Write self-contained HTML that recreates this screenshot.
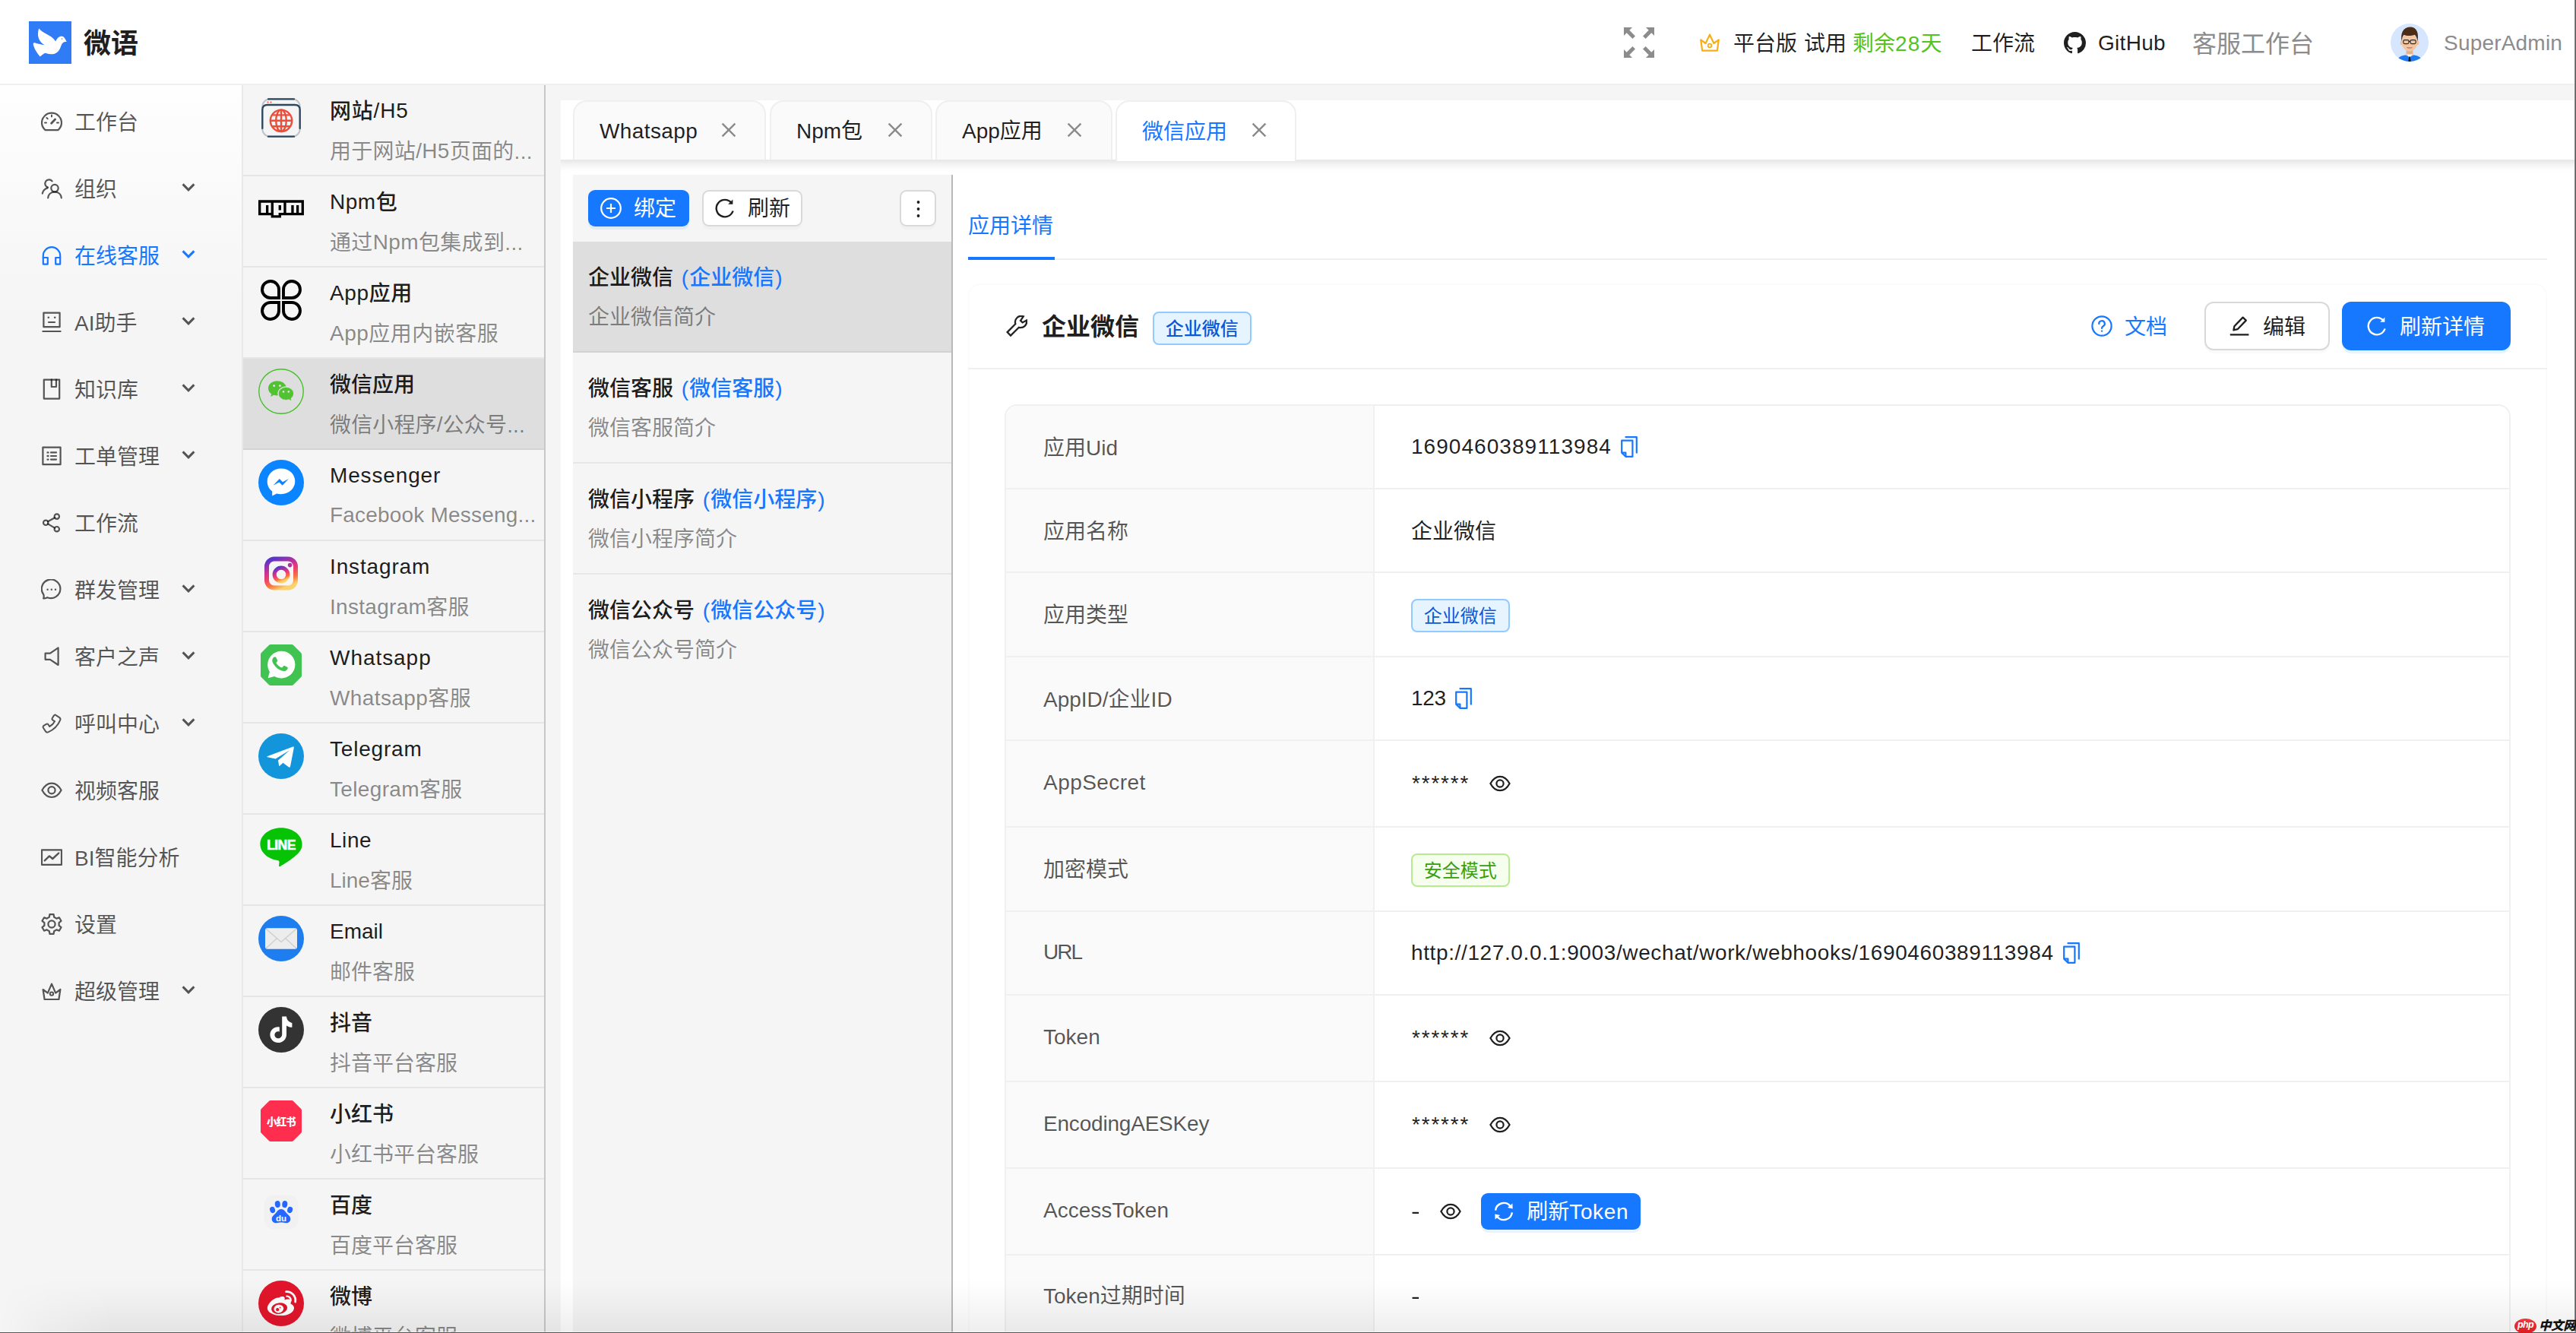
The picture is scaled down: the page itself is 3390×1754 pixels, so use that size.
<!DOCTYPE html>
<html lang="zh-CN">
<head>
<meta charset="utf-8">
<title>微语</title>
<style>
*{box-sizing:border-box;margin:0;padding:0}
html,body{width:3390px;height:1754px;overflow:hidden;background:#fff}
body{font-family:"Liberation Sans","Noto Sans CJK SC",sans-serif;font-size:28px;color:rgba(0,0,0,.88);position:relative;-webkit-font-smoothing:antialiased}
.abs{position:absolute}
svg{display:block}
/* header */
#hd{position:absolute;left:0;top:0;width:3390px;height:112px;background:#fff;border-bottom:2px solid #efefef;z-index:5}
#hd .t{position:absolute;top:0;height:110px;line-height:110px;white-space:nowrap}
#logo{position:absolute;left:38px;top:28px;width:56px;height:56px;background:#2f7cf6}
#brand{left:110px;top:3px!important;font-size:36px;font-weight:700;color:#1f1f1f}
/* sidebar */
#sb{position:absolute;left:0;top:112px;width:320px;height:1642px;border-right:2px solid #e9e9e9;background:linear-gradient(180deg,#fefefe 0,#f5f5f5 300px,#f5f5f5 100%)}
.mi{position:absolute;left:0;width:318px;height:80px;line-height:80px;color:rgba(0,0,0,.66);white-space:nowrap}
.mi svg.ic{position:absolute;left:54px;top:26px;width:28px;height:28px}
.mi span{position:absolute;left:98px;top:2px}
.mi svg.ar{position:absolute;left:239px;top:30px;width:18px;height:18px}
.mi.on{color:#1677ff}
/* channel list */
#cl{position:absolute;left:320px;top:112px;width:396px;height:1642px;background:#f5f5f5;overflow:hidden}
#clb{position:absolute;left:716px;top:112px;width:2px;height:1642px;background:#c8c8c8}
.ch{position:absolute;left:0;width:396px;height:120px;border-bottom:2px solid #e6e6e6}
.ch .l{font-style:normal;position:relative;top:-1px}.ch .c{margin-top:1px}.ch .ds.c{margin-top:2px}
.ch.on{background:#dedede;border-bottom-color:#d4d4d4}
.ch .av{position:absolute;left:20px;top:13px;width:60px;height:60px}
.ch .tt{position:absolute;left:114px;top:12px;line-height:44px;font-weight:500;color:rgba(0,0,0,.9);white-space:nowrap}
.ch .ds{position:absolute;left:114px;top:64px;line-height:44px;color:rgba(0,0,0,.46);white-space:nowrap}
/* main */
#mainbg{position:absolute;left:718px;top:112px;width:2672px;height:1642px;background:#f5f5f5}
#white{position:absolute;left:738px;top:132px;width:2652px;height:1622px;background:#fff}
#tabbar{position:absolute;left:738px;top:132px;width:2652px;height:78px;background:#fff;z-index:3}
#tabsh{position:absolute;left:738px;top:210px;width:2652px;height:16px;background:linear-gradient(180deg,#e8e8e8 0,#eaeaea 2px,#f1f1f1 5px,#fafafa 11px,#fff 16px);z-index:2}
.tab{position:absolute;top:0;height:78px;border:2px solid #efefef;border-bottom:none;border-radius:18px 18px 0 0;background:#fafafa;line-height:74px;white-space:nowrap}
.tab.on{background:#fff;color:#1677ff;height:80px;z-index:3}
.tab span{position:absolute;top:2px}
.tab span.x{top:0}
.tab svg{position:absolute;top:27px;width:20px;height:20px}
/* col3 */
#c3{position:absolute;left:754px;top:230px;width:498px;height:1524px;background:#f5f5f5}
#c3b{position:absolute;left:1252px;top:230px;width:2px;height:1524px;background:#b9b9b9}
.btn{position:absolute;height:48px;border-radius:9px;white-space:nowrap;line-height:44px}
.btn.pri{background:#1677ff;color:#fff;box-shadow:0 4px 0 rgba(5,145,255,.1)}
.btn.def{background:#fff;border:2px solid #d9d9d9;box-shadow:0 4px 0 rgba(0,0,0,.02);color:rgba(0,0,0,.88)}
.btn svg{position:absolute}
.btn span{position:absolute;top:3px}
.btn.def span{top:1px}
.it{position:absolute;left:0;width:498px;height:146px;border-bottom:2px solid #e7e7e7}
.it.on{background:#dedede;border-bottom-color:#d2d2d2}
.it .a{position:absolute;left:20px;top:26px;line-height:44px;font-weight:500;white-space:nowrap;color:rgba(0,0,0,.9)}
.it .a b{font-weight:500;color:#1677ff;margin-left:3px}.it .a b i{font-style:normal;display:inline-block;width:10.4px}.it .a b i.r{text-align:right}
.it .d{position:absolute;left:20px;top:78px;line-height:44px;color:rgba(0,0,0,.46);white-space:nowrap}
/* detail */
#navt{position:absolute;left:1274px;top:276px;line-height:44px;color:#1677ff;white-space:nowrap}
#ink{position:absolute;left:1274px;top:338px;width:114px;height:4px;background:#1677ff;z-index:1}
#navl{position:absolute;left:1274px;top:340px;width:2078px;height:2px;background:#f0f0f0}
#card{position:absolute;left:1274px;top:373px;width:2078px;height:1500px;border:2px solid #fbfbfb;border-radius:16px}
#cardl{position:absolute;left:1274px;top:484px;width:2078px;height:2px;background:#f0f0f0}
#ctitle{position:absolute;left:1371px;top:406px;line-height:48px;font-size:32px;font-weight:700;color:rgba(0,0,0,.9);white-space:nowrap}
.tag{display:inline-block;height:44px;line-height:42px;padding:0 14.8px;font-size:24px;border:2px solid #91caff;background:#e6f4ff;color:#0958d9;border-radius:8px;white-space:nowrap;vertical-align:middle}
.tag.g{border-color:#b7eb8f;background:#f6ffed;color:#389e0d}
#tb{position:absolute;left:1322px;top:532px;width:1982px;border:2px solid #f0f0f0;border-radius:16px 16px 0 0;overflow:hidden;border-bottom:none}
.row{display:flex;height:110px;border-bottom:2px solid #f0f0f0}
.row.h{height:114px}.row.t{height:111px}
.lb{flex:0 0 485px;border-right:2px solid #f0f0f0;background:#fafafa;padding-left:49px;color:rgba(0,0,0,.66);display:flex;align-items:center;white-space:nowrap;padding-bottom:3px}
.ct{flex:1;padding-left:48px;display:flex;align-items:center;white-space:nowrap}
.ct svg{flex:none}
.bigbtn{position:absolute;top:397px;height:64px;border-radius:12px;white-space:nowrap;line-height:60px}
.bigbtn svg{position:absolute}
.bigbtn span{position:absolute;top:0}
#edr{position:absolute;right:0;top:0;width:2px;height:1754px;background:linear-gradient(90deg,#9a9a9a,#4a4a4a);z-index:20}
#edb{position:absolute;left:0;bottom:0;width:3390px;height:2px;background:linear-gradient(180deg,rgba(255,255,255,.55) 0,rgba(255,255,255,.55) 40%,#5a5a5a 60%,#4c4c4c 100%);z-index:20}
#shb{position:absolute;left:0;bottom:0;width:3390px;height:70px;background:linear-gradient(180deg,rgba(0,0,0,0),rgba(0,0,0,.025) 40%,rgba(0,0,0,.065));-webkit-mask-image:linear-gradient(90deg,transparent 0,rgba(0,0,0,.5) 60px,#000 150px);mask-image:linear-gradient(90deg,transparent 0,rgba(0,0,0,.5) 60px,#000 150px);z-index:19}
.st{letter-spacing:1.8px;margin-left:1px}
.tag{position:relative;top:1px}

</style>
</head>
<body>

<div id="hd">
<div id="logo"><svg viewBox="0 0 56 56" width="56" height="56"><path fill="#fff" d="M13.4 9.6C18 16 30 18 35.2 26.6C37 22 40 19.5 43.4 19.7C47 20 48 24 49.8 27C46 26.5 44 28 42.5 32C40 40 36 43.5 28.6 43.3C26 43.2 24 42.5 21.6 41.8C18.5 43 17 45 14.6 46.4C10 41 6.5 35 5.7 30.1C5.8 28.6 6.6 28 7.6 28.2C12 29.5 16 30.5 20.8 31.3C14 28 11 20 12.2 14C12.5 12 12.8 10.5 13.4 9.6Z"/><circle cx="43.6" cy="23" r=".8" fill="#2f7cf6"/></svg></div>
<div class="t" id="brand">微语</div>
<svg class="abs" style="left:2137px;top:36px" width="40" height="40" viewBox="0 0 40 40" fill="#8c8c8c"><path d="M0 0H11L7.3 3.7 15 11.4 11.4 15 3.7 7.3 0 11ZM40 0V11L36.3 7.3 28.6 15 25 11.4 32.7 3.7 29 0ZM0 40V29L3.7 32.7 11.4 25 15 28.6 7.3 36.3 11 40ZM40 40H29L32.7 36.3 25 28.6 28.6 25 36.3 32.7 40 29Z"/></svg>
<svg class="abs" style="left:2236px;top:43px" width="28" height="26" viewBox="0 0 28 26" fill="none" stroke="#faad14" stroke-width="2.2" stroke-linejoin="round"><path d="M2.2 9.4l6.4 4.6L14 2.6l5.4 11.4 6.4-4.6-2 14.2H4.2Z"/><circle cx="14" cy="17" r="2.3" stroke-width="1.8"/></svg>
<div class="t" style="left:2281px;top:3px">平台版</div>
<div class="t" style="left:2374px;top:3px">试用</div>
<div class="t" style="left:2438px;top:3px;color:#52c41a"><span style="letter-spacing:0">剩余</span><span style="letter-spacing:1.2px">28</span>天</div>
<div class="t" style="left:2594px;top:3px">工作流</div>
<svg class="abs" style="left:2716px;top:42px" width="29" height="29" viewBox="0 0 16 16" fill="#1f1f1f"><path d="M8 0C3.58 0 0 3.58 0 8c0 3.54 2.29 6.53 5.47 7.59.4.07.55-.17.55-.38 0-.19-.01-.82-.01-1.49-2.01.37-2.53-.49-2.69-.94-.09-.23-.48-.94-.82-1.13-.28-.15-.68-.52-.01-.53.63-.01 1.08.58 1.23.82.72 1.21 1.87.87 2.33.66.07-.52.28-.87.51-1.07-1.78-.2-3.64-.89-3.64-3.95 0-.87.31-1.59.82-2.15-.08-.2-.36-1.02.08-2.12 0 0 .67-.21 2.2.82.64-.18 1.32-.27 2-.27.68 0 1.36.09 2 .27 1.53-1.04 2.2-.82 2.2-.82.44 1.1.16 1.92.08 2.12.51.56.82 1.27.82 2.15 0 3.07-1.87 3.75-3.65 3.95.29.25.54.73.54 1.48 0 1.07-.01 1.93-.01 2.2 0 .21.15.46.55.38A8.01 8.01 0 0 0 16 8c0-4.42-3.58-8-8-8z"/></svg>
<div class="t" style="left:2761px;top:2px;letter-spacing:.3px">GitHub</div>
<div class="t" style="left:2885px;top:3px;font-size:32px;color:#8c8c8c">客服工作台</div>
<svg class="abs" style="left:3146px;top:31px" width="50" height="50" viewBox="0 0 50 50"><defs><clipPath id="avc"><circle cx="25" cy="25" r="25"/></clipPath></defs><g clip-path="url(#avc)"><rect width="50" height="50" fill="#d6e6ff"/><path d="M8 50C9 45 13 42.4 19 41.4L31 41.4C37 42.4 41 45 42 50Z" fill="#1d7af3"/><rect x="20.6" y="32" width="8.8" height="10.4" fill="#e6b08c"/><path d="M20.8 40.6L25 45 29.2 40.6Z" fill="#fff"/><path d="M24.2 43.6h1.6l1 6.4h-3.6Z" fill="#1a1a1a"/><ellipse cx="14.4" cy="25.4" rx="1.7" ry="2.8" fill="#eebd98"/><ellipse cx="35.6" cy="25.4" rx="1.7" ry="2.8" fill="#eebd98"/><ellipse cx="25" cy="24.4" rx="10.4" ry="12.2" fill="#f3c6a2"/><path d="M14.5 23.4C13 13 16 5 25.5 4.6C34.4 4.6 37.4 12 35.5 23.4C34.8 19 33.6 16.4 31.8 14.8C27 16.6 20.5 16.4 17.6 14.8C15.8 16.6 15 19.6 14.5 23.4Z" fill="#4a2c17"/><g fill="none" stroke="#2b2b2b" stroke-width="1.2"><rect x="16.8" y="21.6" width="7.2" height="5" rx="1.8"/><rect x="26" y="21.6" width="7.2" height="5" rx="1.8"/><path d="M24 23.4h2"/></g><path d="M21.6 31.6q3.4 2.4 6.8 0Z" fill="#fff" stroke="#b5705a" stroke-width=".8"/></g></svg>
<div class="t" style="left:3216px;top:2px;color:#8c8c8c;letter-spacing:.2px">SuperAdmin</div>
</div>
<div id="sb">
<div class="mi" style="top:8px"><svg class="ic" viewBox="0 0 28 28" fill="none" stroke="currentColor" stroke-width="2.2" stroke-linecap="round" stroke-linejoin="round"><path d="M5.6 25.2H22.4C25 22.8 27 19.4 27 15.6A13 13 0 0 0 1 15.6C1 19.4 3 22.8 5.6 25.2Z"/><path d="M14 5.6v2M5 15.4h2M21 15.4h2M7.4 9l1.4 1.4" stroke-width="2"/><path d="M13.6 16.2l5-5.2" stroke-width="2.8"/></svg><span>工作台</span></div>
<div class="mi" style="top:96px"><svg class="ic" viewBox="0 0 28 28" fill="none" stroke="currentColor" stroke-width="2.2" stroke-linecap="round" stroke-linejoin="round"><circle cx="18" cy="13.6" r="4.7"/><path d="M9.2 26.4C9.6 21.6 13 18.6 18 18.6S26.4 21.6 26.8 26.4"/><path d="M14.6 4.4A5.2 5.2 0 1 0 9 12.6"/><path d="M1.8 20.6C2.6 17 5 14.4 8.4 13.4"/></svg><span>组织</span><svg class="ar" viewBox="0 0 18 18" fill="none" stroke="currentColor" stroke-width="3" stroke-linecap="butt" stroke-linejoin="miter"><path d="M1.6 4.4L9 11.8l7.4-7.4"/></svg></div>
<div class="mi on" style="top:184px"><svg class="ic" viewBox="0 0 28 28" fill="none" stroke="currentColor" stroke-width="2.2" stroke-linecap="round" stroke-linejoin="round"><path d="M2.8 17V14.4A11.2 11.2 0 0 1 25.2 14.4V17"/><rect x="2.8" y="17" width="6" height="8.6"/><rect x="19.2" y="17" width="6" height="8.6"/></svg><span>在线客服</span><svg class="ar" viewBox="0 0 18 18" fill="none" stroke="currentColor" stroke-width="3" stroke-linecap="butt" stroke-linejoin="miter"><path d="M1.6 4.4L9 11.8l7.4-7.4"/></svg></div>
<div class="mi" style="top:272px"><svg class="ic" viewBox="0 0 28 28" fill="none" stroke="currentColor" stroke-width="2.2" stroke-linecap="round" stroke-linejoin="round"><rect x="3.4" y="1.6" width="21.2" height="18.6"/><path d="M2.4 26h23.2"/><path d="M10 14h8"/><circle cx="9.8" cy="7.8" r="1.3" fill="currentColor" stroke="none"/><circle cx="18.2" cy="7.8" r="1.3" fill="currentColor" stroke="none"/></svg><span>AI助手</span><svg class="ar" viewBox="0 0 18 18" fill="none" stroke="currentColor" stroke-width="3" stroke-linecap="butt" stroke-linejoin="miter"><path d="M1.6 4.4L9 11.8l7.4-7.4"/></svg></div>
<div class="mi" style="top:360px"><svg class="ic" viewBox="0 0 28 28" fill="none" stroke="currentColor" stroke-width="2.2" stroke-linecap="round" stroke-linejoin="round"><rect x="3.8" y="1.6" width="20.4" height="25"/><path d="M13.8 1.6V11H20V1.6"/></svg><span>知识库</span><svg class="ar" viewBox="0 0 18 18" fill="none" stroke="currentColor" stroke-width="3" stroke-linecap="butt" stroke-linejoin="miter"><path d="M1.6 4.4L9 11.8l7.4-7.4"/></svg></div>
<div class="mi" style="top:448px"><svg class="ic" viewBox="0 0 28 28" fill="none" stroke="currentColor" stroke-width="2.2" stroke-linecap="round" stroke-linejoin="round"><rect x="2.4" y="2.6" width="23.2" height="22.6"/><path d="M13 9.4h7M13 14h7M13 18.6h7"/><path d="M8.6 9.4h.8M8.6 14h.8M8.6 18.6h.8" stroke-width="2.4"/></svg><span>工单管理</span><svg class="ar" viewBox="0 0 18 18" fill="none" stroke="currentColor" stroke-width="3" stroke-linecap="butt" stroke-linejoin="miter"><path d="M1.6 4.4L9 11.8l7.4-7.4"/></svg></div>
<div class="mi" style="top:536px"><svg class="ic" viewBox="0 0 28 28" fill="none" stroke="currentColor" stroke-width="2.2" stroke-linecap="round" stroke-linejoin="round"><circle cx="20.8" cy="5.6" r="3.2"/><circle cx="6.2" cy="13.8" r="3.2"/><circle cx="20.8" cy="22.2" r="3.2"/><path d="M9 12.2l9-5M9 15.4l9 5.2"/></svg><span>工作流</span></div>
<div class="mi" style="top:624px"><svg class="ic" viewBox="0 0 28 28" fill="none" stroke="currentColor" stroke-width="2.2" stroke-linecap="round" stroke-linejoin="round"><path d="M3.2 25.4C5.6 25.6 7.4 25 8.4 24.2A12.3 12.3 0 1 0 3.4 20.4C3.8 22 3.8 23.8 3.2 25.4Z"/><circle cx="8.6" cy="13.8" r="1.2" fill="currentColor" stroke="none"/><circle cx="13.8" cy="13.8" r="1.2" fill="currentColor" stroke="none"/><circle cx="19" cy="13.8" r="1.2" fill="currentColor" stroke="none"/></svg><span>群发管理</span><svg class="ar" viewBox="0 0 18 18" fill="none" stroke="currentColor" stroke-width="3" stroke-linecap="butt" stroke-linejoin="miter"><path d="M1.6 4.4L9 11.8l7.4-7.4"/></svg></div>
<div class="mi" style="top:712px"><svg class="ic" viewBox="0 0 28 28" fill="none" stroke="currentColor" stroke-width="2.2" stroke-linecap="round" stroke-linejoin="round"><path d="M22.6 2.4V25L12 17.8H5.6V9.6H12Z"/></svg><span>客户之声</span><svg class="ar" viewBox="0 0 18 18" fill="none" stroke="currentColor" stroke-width="3" stroke-linecap="butt" stroke-linejoin="miter"><path d="M1.6 4.4L9 11.8l7.4-7.4"/></svg></div>
<div class="mi" style="top:800px"><svg class="ic" viewBox="0 0 28 28" fill="none" stroke="currentColor" stroke-width="2.2" stroke-linecap="round" stroke-linejoin="round"><path d="M19.6 3.2l4.6 3c1.2.8 1.5 2.2 1 3.4C21.8 17.6 17.4 22 9.4 25.4c-1.2.5-2.6.2-3.4-1L3 19.8c-.7-1-.4-2.2.6-2.9l3.2-2c1-.6 2.2-.3 2.8.6L11.2 18c3-1.6 5.2-3.8 6.8-6.8L15.5 9.6c-.9-.6-1.2-1.8-.6-2.8l2-3.2c.7-1 1.9-1.3 2.9-.6Z" stroke-width="2"/></svg><span>呼叫中心</span><svg class="ar" viewBox="0 0 18 18" fill="none" stroke="currentColor" stroke-width="3" stroke-linecap="butt" stroke-linejoin="miter"><path d="M1.6 4.4L9 11.8l7.4-7.4"/></svg></div>
<div class="mi" style="top:888px"><svg class="ic" viewBox="0 0 28 28" fill="none" stroke="currentColor" stroke-width="2.2" stroke-linecap="round" stroke-linejoin="round"><path d="M1.4 13.8C4.8 7.4 9.2 4.6 14 4.6s9.2 2.8 12.6 9.2C23.2 20.2 18.8 23 14 23S4.8 20.2 1.4 13.8Z"/><circle cx="14" cy="13.8" r="4.6"/></svg><span>视频客服</span></div>
<div class="mi" style="top:976px"><svg class="ic" viewBox="0 0 28 28" fill="none" stroke="currentColor" stroke-width="2.2" stroke-linecap="round" stroke-linejoin="round"><rect x="1" y="4.4" width="26" height="19.4"/><path d="M4.8 18.4l6.2-6 4.2 3.6 8-7.4" stroke-width="2.4"/></svg><span>BI智能分析</span></div>
<div class="mi" style="top:1064px"><svg class="ic" viewBox="0 0 28 28" fill="none" stroke="currentColor" stroke-width="2.2" stroke-linecap="round" stroke-linejoin="round"><path d="M10.8 4.7 L11.4 1.1 L16.6 1.1 L17.2 4.7 L20.4 6.6 L23.9 5.3 L26.5 9.8 L23.6 12.1 L23.6 15.9 L26.5 18.2 L23.9 22.7 L20.4 21.4 L17.2 23.3 L16.6 26.9 L11.4 26.9 L10.8 23.3 L7.6 21.4 L4.1 22.7 L1.5 18.2 L4.4 15.9 L4.4 12.1 L1.5 9.8 L4.1 5.3 L7.6 6.6Z"/><circle cx="14" cy="14" r="4.6"/></svg><span>设置</span></div>
<div class="mi" style="top:1152px"><svg class="ic" viewBox="0 0 28 28" fill="none" stroke="currentColor" stroke-width="2.2" stroke-linecap="round" stroke-linejoin="round"><path d="M2.6 12l6.2 4.6L14 4.6l5.2 12L25.4 12l-2 13H4.6Z"/><circle cx="14" cy="17.6" r="2.2" stroke-width="2"/></svg><span>超级管理</span><svg class="ar" viewBox="0 0 18 18" fill="none" stroke="currentColor" stroke-width="3" stroke-linecap="butt" stroke-linejoin="miter"><path d="M1.6 4.4L9 11.8l7.4-7.4"/></svg></div>
</div>
<div id="cl">
<div class="ch" style="top:0px"><svg class="av" viewBox="0 0 60 60" ><g fill="none" stroke="#2c4861" stroke-width="2.3" stroke-linecap="round">
<rect x="5.3" y="5.3" width="49.4" height="49.4" rx="10" opacity=".28" stroke-width="2"/><path d="M13 5.3H47M13 54.7H47"/><path d="M5.3 44V19.5Q5.3 13 12 13H48Q54.7 13 54.7 19.5V44"/></g>
<g fill="none" stroke="#ea4f3b" stroke-width="2.4"><circle cx="30" cy="33.8" r="14.2"/><ellipse cx="30" cy="33.8" rx="6.8" ry="14.2"/><path d="M30 19.6V48M15.8 33.8H44.2M18 26.4H42M18 41.2H42"/></g>
<circle cx="12.5" cy="9.4" r="1" fill="#ea4f3b"/><circle cx="16.5" cy="9.4" r="1" fill="#ea4f3b"/></svg><div class="tt c" style="letter-spacing:0.8px">网站<i class="l">/H5</i></div><div class="ds c" style="letter-spacing:0.3px">用于网站<i class="l">/H5</i>页面的...</div></div>
<div class="ch" style="top:120px"><svg class="av" viewBox="0 0 60 60" ><g transform="translate(0,18.3) scale(3.33)"><path fill="#000" fill-rule="evenodd" d="M0,0h18v6H9v1H5V6H0V0z M1,5h2V2h1v3h1V1H1V5z M6,1v5h2V5h2V1H6z M8,2h1v2H8V2z M11,1v4h2V2h1v3h1V2h1v3h1V1H11z"/></g></svg><div class="tt c" style="letter-spacing:0.5px"><i class="l">Npm</i>包</div><div class="ds c" style="letter-spacing:0.35px">通过<i class="l">Npm</i>包集成到...</div></div>
<div class="ch" style="top:240px"><svg class="av" viewBox="0 0 60 60" ><g fill="none" stroke="#000" stroke-width="3.9" stroke-linejoin="miter">
<path d="M27 27H16.5A11 11 0 1 1 27 16.5Z"/><path d="M33 27V16.5A11 11 0 1 1 43.5 27Z"/>
<path d="M27 33V43.5A11 11 0 1 1 16.5 33Z"/><path d="M33 33H43.5A11 11 0 1 1 33 43.5Z"/></g></svg><div class="tt c" style="letter-spacing:0.6px"><i class="l">App</i>应用</div><div class="ds c" style="letter-spacing:0.5px"><i class="l">App</i>应用内嵌客服</div></div>
<div class="ch on" style="top:360px"><svg class="av" viewBox="0 0 60 60" ><circle cx="30" cy="30" r="29.2" fill="none" stroke="#46c02a" stroke-width="1.4"/>
<path fill="#51c332" d="M24.6 16.2c-6.4 0-11.6 4.3-11.6 9.7 0 3 1.7 5.7 4.3 7.5l-1.3 3.6 4.3-2.2c1.3.4 2.7.6 4.3.6.4 0 .8 0 1.2-.1-.3-.8-.4-1.7-.4-2.6 0-5 4.8-9.1 10.7-9.1h.5C35.4 19.3 30.5 16.2 24.6 16.2Z"/>
<ellipse cx="36.4" cy="32.9" rx="10.2" ry="8.6" fill="#51c332" stroke="#dedede" stroke-width="1"/>
<path fill="#51c332" d="M40 40l3.4 2.2-1-3.8Z"/>
<circle cx="20.6" cy="22.6" r="1.5" fill="#dedede"/><circle cx="28.4" cy="22.6" r="1.5" fill="#dedede"/>
<circle cx="33" cy="30.4" r="1.3" fill="#dedede"/><circle cx="39.8" cy="30.4" r="1.3" fill="#dedede"/></svg><div class="tt c">微信应用</div><div class="ds c" style="letter-spacing:0.15px">微信小程序<i class="l">/</i>公众号...</div></div>
<div class="ch" style="top:480px"><svg class="av" viewBox="0 0 60 60" ><circle cx="30" cy="30" r="30" fill="#0a84ff"/>
<path fill="#fff" d="M30 11.5c-10.3 0-18.3 7.5-18.3 16.9 0 5.3 2.5 10 6.5 13.1v6.1l5.9-3.2c1.9.5 3.8.8 5.9.8 10.3 0 18.3-7.5 18.3-16.9S40.3 11.5 30 11.5Z"/>
<path fill="#0a84ff" d="M19.5 33.8l8.3-8.8 4.2 4.2 7.9-4.2-8.2 8.8-4.3-4.2Z"/></svg><div class="tt" style="letter-spacing:0.85px">Messenger</div><div class="ds" style="letter-spacing:0.2px">Facebook Messeng...</div></div>
<div class="ch" style="top:600px"><svg class="av" viewBox="0 0 60 60" ><defs><linearGradient id="ig" x1="0.2" y1="0" x2="0.6" y2="1"><stop offset="0" stop-color="#5b35c9"/><stop offset="0.3" stop-color="#c22f9c"/><stop offset="0.55" stop-color="#ee3f6d"/><stop offset="0.8" stop-color="#f77a3b"/><stop offset="1" stop-color="#fcd26a"/></linearGradient></defs>
<rect x="11" y="10.5" width="38" height="38" rx="10" fill="none" stroke="url(#ig)" stroke-width="6"/>
<circle cx="30" cy="31" r="8.8" fill="none" stroke="url(#ig)" stroke-width="5.2"/><circle cx="41.6" cy="18.6" r="2.8" fill="#b72fa8"/></svg><div class="tt" style="letter-spacing:0.85px">Instagram</div><div class="ds c" style="letter-spacing:0.3px"><i class="l">Instagram</i>客服</div></div>
<div class="ch" style="top:720px"><svg class="av" viewBox="0 0 60 60" ><path fill="#41c352" stroke="#41c352" stroke-width="6" stroke-linejoin="round" d="M16 6H44L54 16V44L44 54H16L6 44V16Z"/>
<path fill="#fff" d="M30.3 11.8c-10 0-18.1 8-18.1 17.9 0 3.4 1 6.6 2.7 9.3L12.6 47.2l8.6-2.2c2.7 1.5 5.8 2.4 9.1 2.4 10 0 18.1-8 18.1-17.9S40.3 11.8 30.3 11.8Z"/>
<path fill="#41c352" d="M24 19.5c-.6-1.3-1.2-1.3-1.8-1.3h-1.5c-.5 0-1.4.2-2.1 1s-2.8 2.7-2.8 6.6 2.9 7.7 3.3 8.2 5.6 8.8 13.8 12c6.8 2.6 8.2 2.1 9.7 2s4.8-1.9 5.5-3.8.7-3.5.5-3.8-.7-.5-1.5-.9-4.8-2.3-5.5-2.6-1.3-.4-1.8.4-2.1 2.6-2.6 3.1-1 .6-1.8.2-3.4-1.2-6.5-4c-2.4-2.1-4-4.7-4.5-5.5s0-1.2.4-1.6c.4-.4.8-1 1.2-1.4s.5-.8.8-1.3 0-1-.1-1.4S24.6 20.8 24 19.5Z" transform="translate(8.5,8.2) scale(.62)"/></svg><div class="tt" style="letter-spacing:0.95px">Whatsapp</div><div class="ds c" style="letter-spacing:0.4px"><i class="l">Whatsapp</i>客服</div></div>
<div class="ch" style="top:840px"><svg class="av" viewBox="0 0 60 60" ><circle cx="30" cy="30" r="30" fill="#1395dc"/>
<path fill="#fff" d="M11.6 30.2L45.5 17.6c.8-.3 1.5.2 1.3 1.2L42 43.8c-.2 1-1 1.3-1.8.8l-7.8-5.8-4 3.8c-.5.5-1.2.3-1.3-.4L26 35.5 41 22.2 22.6 33.6 12 31.2c-.8-.2-.9-.8-.4-1Z"/></svg><div class="tt" style="letter-spacing:0.8px">Telegram</div><div class="ds c" style="letter-spacing:0.35px"><i class="l">Telegram</i>客服</div></div>
<div class="ch" style="top:960px"><svg class="av" viewBox="0 0 60 60" ><path fill="#06c305" d="M30 4.2c-15.2 0-27.6 9.6-27.6 21.5 0 10.5 9.6 19.3 22.6 21.2 1.5.3 2.6 1 2.5 2.3l-.5 4.8c-.1 1.1.9 1.5 1.9.9 4-2.2 14.6-8.6 20.6-14.3 5.2-4.2 8.1-9.1 8.1-14.9C57.6 13.8 45.2 4.2 30 4.2Z"/>
<text x="30" y="32.6" text-anchor="middle" font-family="Liberation Sans, sans-serif" font-weight="700" font-size="17.5" fill="#fff" letter-spacing="-0.6" stroke="#fff" stroke-width=".6">LINE</text></svg><div class="tt" style="letter-spacing:0.55px">Line</div><div class="ds c"><i class="l">Line</i>客服</div></div>
<div class="ch" style="top:1080px"><svg class="av" viewBox="0 0 60 60" ><circle cx="30" cy="30" r="30" fill="#1e7ef0"/>
<rect x="9" y="16.2" width="42" height="27.6" rx="3" fill="#ededed"/>
<path fill="none" stroke="#cfcfcf" stroke-width="1.5" stroke-linejoin="round" d="M9.8 17L30 34.5 50.2 17M9.8 43L24.4 29.8M50.2 43L35.6 29.8"/></svg><div class="tt">Email</div><div class="ds c">邮件客服</div></div>
<div class="ch" style="top:1200px"><svg class="av" viewBox="0 0 60 60" ><circle cx="30" cy="30" r="30" fill="#333"/>
<path fill="#fff" d="M31.2 12.6h5.8c.3 4.5 3.1 7.6 7.4 8.3v5.8c-2.8 0-5.3-.8-7.4-2.3V36.2c0 6.3-4.9 10.9-10.9 10.9S15.4 42.4 15.4 36.6s4.7-10.3 10.6-10.3c.6 0 1.2 0 1.8.1v6.1c-.6-.2-1.2-.3-1.8-.3-2.5 0-4.6 2-4.6 4.5s2.1 4.5 4.7 4.5c2.7 0 5.1-2 5.1-5.5Z"/></svg><div class="tt c">抖音</div><div class="ds c">抖音平台客服</div></div>
<div class="ch" style="top:1320px"><svg class="av" viewBox="0 0 60 60" ><path fill="#ff2d4e" stroke="#ff2d4e" stroke-width="6" stroke-linejoin="round" d="M16 6H44L54 16V44L44 54H16L6 44V16Z"/>
<text x="30" y="36.4" text-anchor="middle" font-family="Noto Sans CJK SC, sans-serif" font-weight="900" font-size="13.4" fill="#fff" letter-spacing="-0.8">小红书</text></svg><div class="tt c">小红书</div><div class="ds c">小红书平台客服</div></div>
<div class="ch" style="top:1440px"><svg class="av" viewBox="0 0 60 60" ><rect x="7.5" y="7.5" width="45" height="45" rx="13" fill="#f1f1f1"/>
<g fill="#2468ff"><ellipse cx="18.6" cy="27" rx="3.4" ry="4.2" transform="rotate(-18 18.6 27)"/><ellipse cx="25.3" cy="19.6" rx="3.5" ry="4.5" transform="rotate(-4 25.3 19.6)"/><ellipse cx="34.8" cy="19.6" rx="3.5" ry="4.5" transform="rotate(6 34.8 19.6)"/><ellipse cx="41.6" cy="27" rx="3.4" ry="4.2" transform="rotate(18 41.6 27)"/>
<path d="M30 26c3.6 0 5 2.8 7.3 5.5 2 2.3 5 3.8 5 7.5 0 3.3-2.6 5.3-5.8 5.3-2.5 0-4.2-.7-6.5-.7s-4 .7-6.5.7c-3.2 0-5.8-2-5.8-5.3 0-3.7 3-5.2 5-7.5C25 28.8 26.4 26 30 26Z"/></g>
<text x="30" y="42.2" text-anchor="middle" font-family="Liberation Sans, sans-serif" font-weight="700" font-size="11.5" fill="#fff">du</text></svg><div class="tt c">百度</div><div class="ds c">百度平台客服</div></div>
<div class="ch" style="top:1560px"><svg class="av" viewBox="0 0 60 60" ><circle cx="30" cy="30" r="30" fill="#e2162c"/>
<path fill="#fff" d="M27.2 22.5c3.2-1.8 6.2-1.8 7.2-.2.5.9.4 2 0 3.2 3.6-1.4 7-1.3 8.2.9.6 1.1.4 2.5-.3 4 2.8 1 4.7 3 4.7 5.5 0 5.5-7.7 10.2-17.2 10.2S11.8 42 11.8 36.2c0-3.2 2.3-6.8 6-10C21.2 23.4 24.6 22 27.2 22.5Z"/>
<ellipse cx="27.6" cy="36.6" rx="10.6" ry="7.2" fill="#e2162c" transform="rotate(-8 27.6 36.6)"/>
<ellipse cx="26.8" cy="37.2" rx="6.4" ry="5.4" fill="#fff" transform="rotate(-8 26.8 37.2)"/>
<circle cx="25.2" cy="38.2" r="2.1" fill="#e2162c"/><circle cx="28.6" cy="35.6" r=".9" fill="#e2162c"/>
<g fill="none" stroke="#fff" stroke-linecap="round"><path d="M37.4 20.6a5.2 5.2 0 0 1 5.2 6" stroke-width="2.4"/><path d="M36.6 14.6a11.4 11.4 0 0 1 12 13.4" stroke-width="2.8"/></g></svg><div class="tt c">微博</div><div class="ds c">微博平台客服</div></div>
</div><div id="clb"></div>
<div id="mainbg"></div><div id="white"></div>
<div id="tabbar">
<div class="tab" style="left:16px;width:254px"><span style="left:33px"><i style="font-style:normal;letter-spacing:.4px">Whatsapp</i></span><span class="x" style="left:193px"><svg viewBox="0 0 20 20" fill="none" stroke="#8a8a8a" stroke-width="2.4"><path d="M1.6 1.6L18.4 18.4M18.4 1.6L1.6 18.4"/></svg></span></div>
<div class="tab" style="left:275px;width:214px"><span style="left:33px">Npm包</span><span class="x" style="left:153px"><svg viewBox="0 0 20 20" fill="none" stroke="#8a8a8a" stroke-width="2.4"><path d="M1.6 1.6L18.4 18.4M18.4 1.6L1.6 18.4"/></svg></span></div>
<div class="tab" style="left:493px;width:233px"><span style="left:33px">App应用</span><span class="x" style="left:171px"><svg viewBox="0 0 20 20" fill="none" stroke="#8a8a8a" stroke-width="2.4"><path d="M1.6 1.6L18.4 18.4M18.4 1.6L1.6 18.4"/></svg></span></div>
<div class="tab on" style="left:730px;width:238px"><span style="left:33px;top:3px">微信应用</span><span class="x" style="left:177px"><svg viewBox="0 0 20 20" fill="none" stroke="#8a8a8a" stroke-width="2.4"><path d="M1.6 1.6L18.4 18.4M18.4 1.6L1.6 18.4"/></svg></span></div>
</div><div id="tabsh"></div>
<div id="c3">
<div class="btn pri" style="left:20px;top:20px;width:133px"><svg style="left:16px;top:10px" width="28" height="28" viewBox="0 0 28 28" fill="none" stroke="#fff" stroke-width="2.2"><circle cx="14" cy="14" r="12.8"/><path d="M14 8v12M8 14h12"/></svg><span style="left:60px">绑定</span></div>
<div class="btn def" style="left:170px;top:20px;width:132px"><svg style="left:14px;top:8px" width="28" height="28" viewBox="0 0 28 28" fill="none" stroke="#1f1f1f" stroke-width="2.4"><path d="M24.6 17.5A11.2 11.2 0 1 1 22.6 7"/><path d="M24.4 2.6v6.2h-6.2z" fill="#1f1f1f" stroke="none"/></svg><span style="left:58px">刷新</span></div>
<div class="btn def" style="left:430px;top:20px;width:48px"><svg style="left:20px;top:11px" width="5" height="24" viewBox="0 0 5 24" fill="#1f1f1f"><circle cx="2.5" cy="3" r="1.9"/><circle cx="2.5" cy="12" r="1.9"/><circle cx="2.5" cy="21" r="1.9"/></svg></div>
<div class="it on" style="top:88px"><div class="a">企业微信 <b><i>(</i>企业微信<i class="r">)</i></b></div><div class="d">企业微信简介</div></div>
<div class="it" style="top:234px"><div class="a">微信客服 <b><i>(</i>微信客服<i class="r">)</i></b></div><div class="d">微信客服简介</div></div>
<div class="it" style="top:380px"><div class="a">微信小程序 <b><i>(</i>微信小程序<i class="r">)</i></b></div><div class="d">微信小程序简介</div></div>
<div class="it" style="top:526px;border-bottom:none"><div class="a">微信公众号 <b><i>(</i>微信公众号<i class="r">)</i></b></div><div class="d">微信公众号简介</div></div>
</div><div id="c3b"></div>
<div id="navt">应用详情</div><div id="ink"></div><div id="navl"></div>
<div id="card"></div><div id="cardl"></div>
<svg class="abs" style="left:1324px;top:415px" width="28" height="28" viewBox="0 0 28 28" fill="none" stroke="#222" stroke-width="2.3" stroke-linejoin="miter"><path d="M22.8 1.4A8 8 0 0 0 12.3 11.2L1.6 22.1 6 26.6 16.9 15.8A8 8 0 0 0 27 6.6L21.6 9.4 19 6.8Z"/></svg>
<div id="ctitle">企业微信</div>
<div class="tag" style="position:absolute;left:1517px;top:410px;font-weight:500">企业微信</div>
<svg class="abs" style="left:2752px;top:415px" width="28" height="28" viewBox="0 0 28 28" fill="none" stroke="#1677ff" stroke-width="2.2" stroke-linecap="round"><circle cx="14" cy="14" r="12.6"/><path d="M10.2 11a3.8 3.8 0 1 1 5.6 3.3c-1.2.7-1.8 1.4-1.8 2.7"/><circle cx="14" cy="20.6" r="1.2" fill="#1677ff" stroke="none"/></svg>
<div class="abs" style="left:2796px;top:409px;line-height:44px;color:#1677ff">文档</div>
<div class="bigbtn" style="left:2901px;width:165px;background:#fff;border:2px solid #d9d9d9;box-shadow:0 4px 0 rgba(0,0,0,.02)"><svg style="left:30px;top:15px" width="28" height="28" viewBox="0 0 28 28" fill="none" stroke="#1f1f1f" stroke-width="2.3" stroke-linejoin="round"><path d="M1.8 26.4h24.6"/><path d="M6.4 20.4l1-5.2L18.6 3.6l4.2 4L11.6 19.2Z"/></svg><span style="left:75px;top:2px">编辑</span></div>
<div class="bigbtn" style="left:3082px;width:222px;background:#1677ff;color:#fff;box-shadow:0 4px 0 rgba(5,145,255,.1)"><svg style="left:32px;top:18px" width="28" height="28" viewBox="0 0 28 28" fill="none" stroke="#fff" stroke-width="2.4"><path d="M24.6 17.5A11.2 11.2 0 1 1 22.6 7"/><path d="M24.4 2.6v6.2h-6.2z" fill="#fff" stroke="none"/></svg><span style="left:76px;top:4px">刷新详情</span></div>
<div id="tb">
<div class="row"><div class="lb">应用Uid</div><div class="ct"><span style="letter-spacing:1.05px">1690460389113984</span><svg style="margin-left:12px" width="22" height="28" viewBox="0 0 22 28" fill="none" stroke="#1677ff" stroke-width="2.2" stroke-linejoin="round"><path d="M1.2 5.6H15.4V26.8H6.4L1.2 21.6Z"/><path d="M1.2 21.6H6.4V26.8"/><path d="M5.6 1.2H20.8V22.6"/></svg></div></div>
<div class="row"><div class="lb">应用名称</div><div class="ct" style="padding-bottom:2px">企业微信</div></div>
<div class="row t"><div class="lb">应用类型</div><div class="ct"><span class="tag">企业微信</span></div></div>
<div class="row"><div class="lb">AppID/企业ID</div><div class="ct"><span style="letter-spacing:-.3px">123</span><svg style="margin-left:12px" width="22" height="28" viewBox="0 0 22 28" fill="none" stroke="#1677ff" stroke-width="2.2" stroke-linejoin="round"><path d="M1.2 5.6H15.4V26.8H6.4L1.2 21.6Z"/><path d="M1.2 21.6H6.4V26.8"/><path d="M5.6 1.2H20.8V22.6"/></svg></div></div>
<div class="row h"><div class="lb" style="letter-spacing:.45px">AppSecret</div><div class="ct"><span class="st">******</span><svg style="margin-left:26px" width="28" height="28" viewBox="0 0 28 28" fill="none" stroke="#1f1f1f" stroke-width="2.2"><path d="M1.4 14C4.8 7.6 9.2 4.8 14 4.8s9.2 2.8 12.6 9.2C23.2 20.4 18.8 23.2 14 23.2S4.8 20.4 1.4 14Z"/><circle cx="14" cy="14" r="4.6"/></svg></div></div>
<div class="row t"><div class="lb">加密模式</div><div class="ct"><span class="tag g">安全模式</span></div></div>
<div class="row"><div class="lb" style="letter-spacing:-2px">URL</div><div class="ct"><span style="letter-spacing:.62px">http://127.0.0.1:9003/wechat/work/webhooks/1690460389113984</span><svg style="margin-left:12px" width="22" height="28" viewBox="0 0 22 28" fill="none" stroke="#1677ff" stroke-width="2.2" stroke-linejoin="round"><path d="M1.2 5.6H15.4V26.8H6.4L1.2 21.6Z"/><path d="M1.2 21.6H6.4V26.8"/><path d="M5.6 1.2H20.8V22.6"/></svg></div></div>
<div class="row h"><div class="lb">Token</div><div class="ct"><span class="st">******</span><svg style="margin-left:26px" width="28" height="28" viewBox="0 0 28 28" fill="none" stroke="#1f1f1f" stroke-width="2.2"><path d="M1.4 14C4.8 7.6 9.2 4.8 14 4.8s9.2 2.8 12.6 9.2C23.2 20.4 18.8 23.2 14 23.2S4.8 20.4 1.4 14Z"/><circle cx="14" cy="14" r="4.6"/></svg></div></div>
<div class="row h"><div class="lb" style="letter-spacing:-.2px">EncodingAESKey</div><div class="ct"><span class="st">******</span><svg style="margin-left:26px" width="28" height="28" viewBox="0 0 28 28" fill="none" stroke="#1f1f1f" stroke-width="2.2"><path d="M1.4 14C4.8 7.6 9.2 4.8 14 4.8s9.2 2.8 12.6 9.2C23.2 20.4 18.8 23.2 14 23.2S4.8 20.4 1.4 14Z"/><circle cx="14" cy="14" r="4.6"/></svg></div></div>
<div class="row h"><div class="lb">AccessToken</div><div class="ct"><span style="display:inline-block;transform:scaleX(1.25);transform-origin:0 50%">-</span><span style="width:29px"></span><svg style="margin-left:0" width="28" height="28" viewBox="0 0 28 28" fill="none" stroke="#1f1f1f" stroke-width="2.2"><path d="M1.4 14C4.8 7.6 9.2 4.8 14 4.8s9.2 2.8 12.6 9.2C23.2 20.4 18.8 23.2 14 23.2S4.8 20.4 1.4 14Z"/><circle cx="14" cy="14" r="4.6"/></svg><div class="btn pri" style="position:relative;margin-left:26px;width:210px"><svg style="left:16px;top:10px" width="28" height="28" viewBox="0 0 28 28" fill="none" stroke="#fff" stroke-width="2.4"><path d="M3.1 12.6A11 11 0 0 1 23 7.6"/><path d="M24.9 15.4A11 11 0 0 1 5 20.4"/><path d="M25.4 3.4l.3 7.2-6.8-1.5zM2.6 24.6l-.3-7.2 6.8 1.5z" fill="#fff" stroke="none"/></svg><span style="left:60px">刷新<i style="font-style:normal;letter-spacing:.6px">Token</i></span></div></div></div>
<div class="row" style="height:200px"><div class="lb" style="align-items:flex-start;padding-top:32px;line-height:44px">Token过期时间</div><div class="ct" style="align-items:flex-start;padding-top:32px;line-height:44px"><span style="display:inline-block;transform:scaleX(1.25);transform-origin:0 50%">-</span></div></div>
</div>
<div id="shb"></div><div id="edr"></div><div id="edb"></div>
<div class="abs" id="wm" style="left:3309px;top:1735px;z-index:21;white-space:nowrap;height:20px"><span style="position:absolute;left:0;top:0;width:29px;height:20px;border-radius:50%;background:linear-gradient(180deg,#f0363c,#d91a22);color:#fff;font-style:italic;font-weight:700;font-size:12.5px;line-height:17px;text-align:center;letter-spacing:-.6px">php</span><span style="position:absolute;left:32px;top:0;font-size:16.5px;font-weight:900;font-style:italic;color:#111;line-height:19px;letter-spacing:-.4px">中文网</span></div>

</body></html>
